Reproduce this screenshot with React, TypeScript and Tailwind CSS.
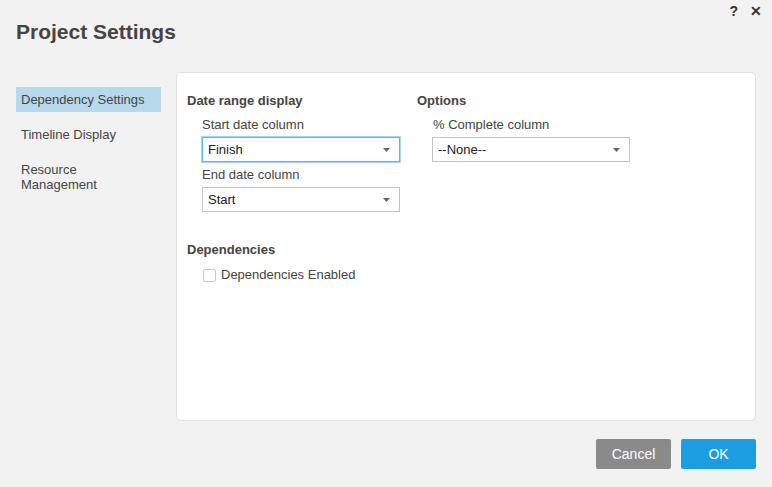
import React from "react";

function Select({ value, focused }: { value: string; focused?: boolean }) {
  return (
    <div
      className={
        "relative flex h-[25px] w-[198px] items-center border bg-white pl-[5px] text-[13px] text-[#222] " +
        (focused ? "border-[#62b6e6] shadow-[0_0_0_1px_#a9d6f0]" : "border-[#c4c4c4]")
      }
    >
      {value}
      <svg className="absolute right-[9px] top-[10px]" width="7" height="4" viewBox="0 0 7 4">
        <path d="M0 0 H7 L3.5 4 Z" fill="#666" />
      </svg>
    </div>
  );
}

export default function App() {
  const nav = ["Dependency Settings", "Timeline Display", "Resource Management"];
  return (
    <div
      className="relative flex h-[487px] w-[772px] flex-col bg-[#f2f2f2] text-[#444]"
      style={{ fontFamily: '"Liberation Sans", Arial, sans-serif' }}
    >
      {/* help / close */}
      <div className="absolute right-[10px] top-[1px] flex items-center gap-[12px] text-[14px] font-bold text-[#333]">
        <span>?</span>
        <span className="text-[14px]">✕</span>
      </div>

      <h1 className="pl-4 pt-[20px] text-[21px] font-bold leading-[24px] text-[#444]">Project Settings</h1>

      <div className="mt-[28px] flex gap-[15px] px-4">
        <div className="flex w-[145px] flex-col gap-[10px] pt-[15px] text-[13px]">
          {nav.map((n, i) => (
            <div
              key={n}
              className={"py-[5px] pl-[5px] pr-[40px] leading-[15px] " + (i === 0 ? "whitespace-nowrap bg-[#b8d9ec]" : "")}
            >
              {n}
            </div>
          ))}
        </div>

        <div className="h-[349px] flex-1 rounded-[5px] border border-[#e0e0e0] bg-white pl-[10px] pt-[19px] text-[13px]">
          <div className="flex">
            <div className="w-[230px]">
              <div className="font-bold leading-[17px]">Date range display</div>
              <div className="pl-[15px]">
                <div className="mt-[6px] leading-[20px]">Start date column</div>
                <div className="mt-[2px]">
                  <Select value="Finish" focused />
                </div>
                <div className="mt-[3px] leading-[20px]">End date column</div>
                <div className="mt-[2px]">
                  <Select value="Start" />
                </div>
              </div>
            </div>
            <div>
              <div className="font-bold leading-[17px]">Options</div>
              <div className="pl-[15px]">
                <div className="mt-[6px] pl-[1px] leading-[20px]">% Complete column</div>
                <div className="mt-[2px]">
                  <Select value="--None--" />
                </div>
              </div>
            </div>
          </div>

          <div className="mt-[29px] font-bold leading-[17px]">Dependencies</div>
          <div className="mt-[7px] flex h-[20px] items-center pl-[16px]">
            <span className="h-[13px] w-[13px] rounded-[2px] border border-[#c8c8c8] bg-white" />
            <span className="ml-[5px]">Dependencies Enabled</span>
          </div>
        </div>
      </div>

      <div className="mt-[18px] flex justify-end gap-[10px] px-4">
        <button className="h-[30px] w-[75px] rounded-[2px] bg-[#8a8a8a] text-[14px] text-white">Cancel</button>
        <button className="h-[30px] w-[75px] rounded-[2px] bg-[#1b9de0] text-[14px] text-white">OK</button>
      </div>
    </div>
  );
}
